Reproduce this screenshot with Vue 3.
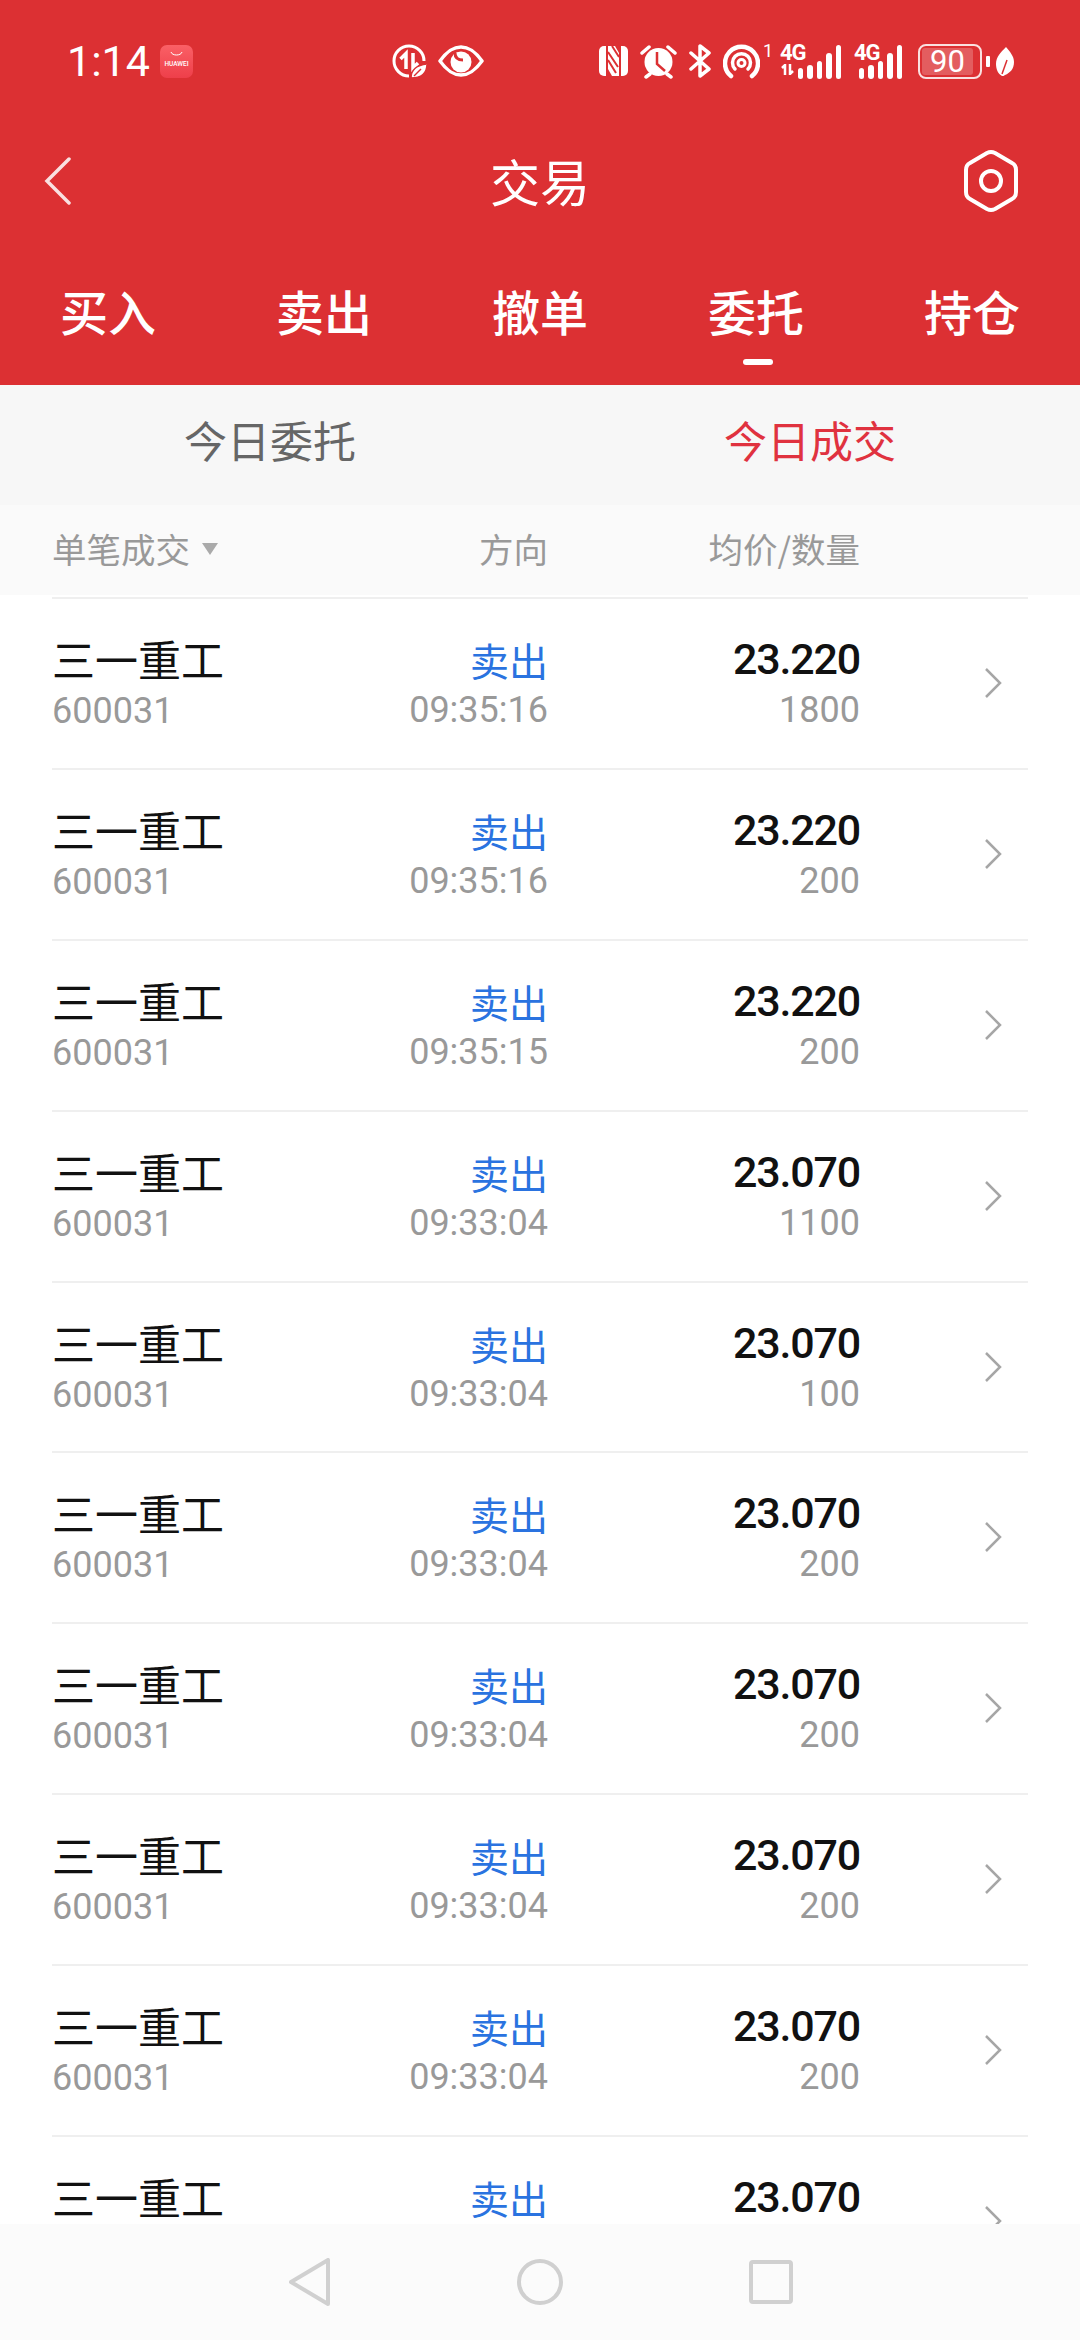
<script setup>
const tabs = ['买入', '卖出', '撤单', '委托', '持仓']

const trades = [
  { time: '09:35:16', price: '23.220', qty: '1800' },
  { time: '09:35:16', price: '23.220', qty: '200' },
  { time: '09:35:15', price: '23.220', qty: '200' },
  { time: '09:33:04', price: '23.070', qty: '1100' },
  { time: '09:33:04', price: '23.070', qty: '100' },
  { time: '09:33:04', price: '23.070', qty: '200' },
  { time: '09:33:04', price: '23.070', qty: '200' },
  { time: '09:33:04', price: '23.070', qty: '200' },
  { time: '09:33:04', price: '23.070', qty: '200' },
  { time: '09:33:04', price: '23.070', qty: '200' },
]
</script>

<template>
  <div class="page">
    <header class="top">
      <div class="status">
        <span class="clock">1:14</span>
        <svg class="ic-store" width="33" height="33" viewBox="0 0 33 33">
          <defs>
            <linearGradient id="store" x1="0" y1="0" x2="0" y2="1">
              <stop offset="0" stop-color="#fa6066" />
              <stop offset="1" stop-color="#ee3f4a" />
            </linearGradient>
          </defs>
          <rect width="33" height="33" rx="7" fill="url(#store)" />
          <path d="M11 7c1 4 10 4 11 0" fill="none" stroke="#fff" stroke-width="1" />
          <text x="16.500" y="21" class="store-text" text-anchor="middle">HUAWEI</text>
        </svg>

        <svg class="ic-data" width="35" height="34" viewBox="0 0 35 34">
          <path d="M32 17A15 15 0 1 0 17 32" fill="none" stroke="#fff" stroke-width="3" />
          <path d="M14 25V9.500L8.500 15M21 9v15l5-5" fill="none" stroke="#fff" stroke-width="3.500" />
          <path d="M19 34c0-8 6-13 16-14 0 9-6 14-16 14z" fill="#fff" stroke="#dc3033" stroke-width="1.500" />
          <path d="M22 32l7-7" stroke="#dc3033" stroke-width="1.500" />
        </svg>
        <svg class="ic-eye" width="46" height="32" viewBox="0 0 46 32">
          <path d="M2 16C10 5 16 2 23 2s13 3 21 14c-8 11-14 14-21 14S10 27 2 16z" fill="none" stroke="#fff" stroke-width="3.500" stroke-linejoin="round" />
          <circle cx="23" cy="17" r="10.500" fill="#fff" />
          <path d="M17 8c0 5 3 7 8 7" fill="none" stroke="#dc3033" stroke-width="3" />
        </svg>

        <svg class="ic-nfc" width="31" height="32" viewBox="0 0 31 32">
          <path d="M8 1H6a5 5 0 0 0-5 5v20a5 5 0 0 0 5 5h2V1z" fill="#fff" />
          <path d="M23 1h2a5 5 0 0 1 5 5v20a5 5 0 0 1-5 5h-2V1z" fill="#fff" />
          <path d="M10 1h7l4 7v23h-7l-4-7V1z" fill="#fff" />
          <path d="M10 7l10 15M10 15l8 13M14 1l7 11" stroke="#dc3033" stroke-width="2" />
        </svg>
        <svg class="ic-alarm" width="37" height="35" viewBox="0 0 37 35">
          <circle cx="18.500" cy="18" r="14" fill="#fff" />
          <path d="M17 8v12l8 7" fill="none" stroke="#dc3033" stroke-width="2.500" />
          <path d="M2 9l7-6M35 9l-7-6M6 33l4-3M31 33l-4-3" stroke="#fff" stroke-width="3.500" stroke-linecap="round" />
        </svg>
        <svg class="ic-bt" width="23" height="34" viewBox="0 0 23 34">
          <path d="M2 25L20 9 11 2v30l9-7L2 9" fill="none" stroke="#fff" stroke-width="3.500" stroke-linejoin="round" stroke-linecap="round" />
        </svg>
        <svg class="ic-hot" width="37" height="35" viewBox="0 0 37 35">
          <path d="M8 32a16.500 16.500 0 1 1 21 0" fill="none" stroke="#fff" stroke-width="4.500" stroke-linecap="round" />
          <path d="M12 25a9 9 0 1 1 13 0" fill="none" stroke="#fff" stroke-width="3.500" stroke-linecap="round" />
          <circle cx="18.500" cy="19" r="3.500" fill="none" stroke="#fff" stroke-width="3" />
        </svg>
        <span class="sim-one">1</span>

        <div class="sim sim-a">
          <div class="sim-label">
            <span>4G</span>
            <svg width="14" height="11" viewBox="0 0 14 11">
              <path d="M4 11V1L1 4M9 0v10l3-3" fill="none" stroke="#fff" stroke-width="2.500" />
            </svg>
          </div>
          <div class="bars">
            <i class="b1"></i><i class="b2"></i><i class="b3"></i><i class="b4"></i><i class="b5"></i>
          </div>
        </div>
        <div class="sim sim-b">
          <div class="sim-label"><span>4G</span></div>
          <div class="bars bars-over">
            <i class="b1"></i><i class="b2"></i><i class="b3"></i><i class="b4"></i><i class="b5"></i>
          </div>
        </div>

        <div class="battery">
          <div class="battery-fill"></div>
          <span class="battery-num">90</span>
        </div>
        <i class="battery-tip"></i>
        <svg class="ic-leaf" width="18" height="29" viewBox="0 0 18 29">
          <path d="M10 0c4 5 8 9 8 15 0 7-4 11-9 13-1 1-2 1-3 1C2 27 0 22 0 17 0 10 5 5 10 0z" fill="#fff" />
          <path d="M6 27l5-14" stroke="#dc3033" stroke-width="1.500" />
        </svg>
      </div>

      <div class="nav">
        <svg width="28" height="48" viewBox="0 0 28 48">
          <path d="M25 2L3 24l22 22" class="back" />
        </svg>
        <span class="title">交易</span>
        <svg class="nav-gear" width="58" height="64" viewBox="0 0 58 64">
          <path d="M25 4q4-2 8 0l17 10q4 2 4 7v22q0 5-4 7L33 60q-4 2-8 0L8 50q-4-2-4-7V21q0-5 4-7z" class="gear" />
          <circle cx="29" cy="32" r="10" class="gear" />
        </svg>
      </div>

      <nav class="tabs">
        <div v-for="(tab, idx) in tabs" :key="tab" class="tab">
          {{ tab }}
          <i v-if="idx === 3" class="tab-mark"></i>
        </div>
      </nav>
    </header>

    <div class="subtabs">
      <div>今日委托</div>
      <div class="on">今日成交</div>
    </div>

    <div class="thead cols">
      <div class="th-first">单笔成交<i class="caret"></i></div>
      <div class="right">方向</div>
      <div class="right">均价/数量</div>
    </div>

    <div class="list">
      <div v-for="(t, idx) in trades" :key="idx" class="row cols">
        <div>
          <div class="name">三一重工</div>
          <div class="sub">600031</div>
        </div>
        <div class="right">
          <div class="dir">卖出</div>
          <div class="sub">{{ t.time }}</div>
        </div>
        <div class="right">
          <div class="price">{{ t.price }}</div>
          <div class="sub">{{ t.qty }}</div>
        </div>
        <svg class="more" width="18" height="30" viewBox="0 0 18 30">
          <path d="M2 1l14 14L2 29" fill="none" stroke="#a6a6a6" stroke-width="2.500" />
        </svg>
      </div>
    </div>

    <footer class="sysbar">
      <svg width="42" height="48" viewBox="0 0 42 48">
        <path d="M39 2v44L2 24z" class="sys" />
      </svg>
      <svg width="46" height="48" viewBox="0 0 46 48">
        <circle cx="23" cy="24" r="21" class="sys" />
      </svg>
      <svg width="44" height="44" viewBox="0 0 44 44">
        <rect x="2" y="2" width="40" height="40" rx="2" class="sys" />
      </svg>
    </footer>
  </div>
</template>

<style>
html,
body {
  margin: 0;
  background: #fff;
}
</style>

<style scoped>
.page {
  position: relative;
  width: 1080px;
  height: 2340px;
  overflow: hidden;
  background: #fff;
  font-family: 'Noto Sans CJK SC', Roboto, sans-serif;
}

.top {
  background: #dc3033;
  color: #fff;
  height: 385px;
}

/* barra de estado */
.status {
  height: 122px;
  display: flex;
  align-items: center;
  color: #fff;
  font-family: Roboto, sans-serif;
}

.clock {
  margin-left: 67px;
  width: 93px;
  font-size: 43px;
}

.store-text {
  font-family: Roboto, sans-serif;
  font-size: 6.500px;
  font-weight: 500;
  fill: #fff;
}

.ic-data { margin-left: 199px; }
.ic-eye { margin-left: 11px; }
.ic-nfc { margin-left: 114px; }
.ic-alarm { margin-left: 11px; }
.ic-bt { margin-left: 12px; }
.ic-hot { margin-left: 11px; }

.sim-one {
  align-self: flex-start;
  margin: 40px 0 0 3px;
  font-size: 18px;
  width: 10px;
}

.sim {
  position: relative;
  height: 36px;
  display: flex;
}

.sim-a { margin-left: 7px; width: 61px; }
.sim-b { margin-left: 13px; width: 50px; }

.sim-label {
  display: flex;
  flex-direction: column;
  font-size: 22px;
  font-weight: 700;
  line-height: 20px;
  letter-spacing: -1px;
  gap: 1px;
}

.sim-label svg {
  margin-left: 1px;
}

.bars {
  position: absolute;
  right: 0;
  bottom: 0;
  display: flex;
  align-items: flex-end;
  gap: 4px;
}

.bars i {
  display: block;
  width: 5.500px;
  border-radius: 3px;
  background: #fff;
}

.bars-over { right: 2px; }
.b1 { height: 11px; }
.b2 { height: 14px; }
.b3 { height: 18px; }
.b4 { height: 26px; }
.b5 { height: 34px; }

.battery {
  position: relative;
  margin-left: 14px;
  width: 64px;
  height: 35px;
  box-sizing: border-box;
  border: 2px solid rgba(255, 255, 255, 0.85);
  border-radius: 8px;
  overflow: hidden;
  display: flex;
  align-items: center;
  justify-content: center;
}

.battery-fill {
  position: absolute;
  inset: 2px 7px 2px 2px;
  background: rgba(255, 255, 255, 0.22);
  border-radius: 3px;
}

.battery-num {
  position: relative;
  font-size: 31px;
  margin-right: 5px;
}

.battery-tip {
  margin-left: 4px;
  width: 4px;
  height: 11px;
  border-radius: 1px;
  background: #fff;
}

.ic-leaf { margin-left: 6px; }

/* título */
.nav {
  height: 118px;
  padding: 0 44px;
  display: grid;
  grid-template-columns: 1fr auto 1fr;
  align-items: center;
}

.nav-gear {
  justify-self: end;
  margin-right: 16px;
}

.back {
  fill: none;
  stroke: rgba(255, 255, 255, 0.85);
  stroke-width: 3.500;
  stroke-linecap: round;
}

.gear {
  fill: none;
  stroke: #fff;
  stroke-width: 4;
  stroke-linejoin: round;
}

.title {
  font-size: 50px;
  line-height: 60px;
  padding-bottom: 2px;
}

.tabs {
  display: grid;
  grid-template-columns: repeat(5, 1fr);
  padding-top: 41px;
}

.tab {
  position: relative;
  text-align: center;
  font-size: 48px;
  font-weight: 500;
  line-height: 58px;
}

.tab-mark {
  position: absolute;
  left: 95px;
  top: 78px;
  width: 30px;
  height: 6px;
  border-radius: 3px;
  background: #fff;
}

/* subpestañas */
.subtabs {
  height: 120px;
  display: grid;
  grid-template-columns: 1fr 1fr;
  background: #f7f7f7;
  color: #666;
  font-size: 43px;
  line-height: 108px;
  text-align: center;
}

.subtabs .on {
  color: #e0323f;
}

.cols {
  display: grid;
  grid-template-columns: 248px 248px 312px 1fr;
  padding: 0 52px;
  margin: 0;
}

.right {
  text-align: right;
}

.thead {
  height: 90px;
  padding-bottom: 5px;
  box-sizing: border-box;
  background: #fafafa;
  align-items: center;
  color: #999;
  font-size: 34.500px;
}

.th-first {
  display: flex;
  align-items: center;
}

.caret {
  margin: 2px 0 0 12px;
  border-left: 8px solid transparent;
  border-right: 8px solid transparent;
  border-top: 12px solid #aaa;
}

.list {
  padding-top: 2px;
}

.row {
  position: relative;
  height: 170.900px;
  align-items: start;
  padding-top: 33px;
  box-sizing: border-box;
}

.row::before {
  content: '';
  position: absolute;
  left: 52px;
  right: 52px;
  top: 0;
  height: 2px;
  background: #efefef;
}

.name {
  font-size: 43px;
  line-height: 56px;
  color: #111;
}

.dir {
  font-size: 39px;
  line-height: 58px;
  color: #2a73e0;
}

.price {
  font-family: Roboto, sans-serif;
  font-size: 43px;
  font-weight: 500;
  letter-spacing: -1.200px;
  line-height: 58px;
  color: #111;
}

.sub {
  font-family: Roboto, sans-serif;
  font-size: 36px;
  line-height: 42px;
  color: #999;
  margin-top: 1px;
}

.name + .sub {
  margin-top: 4px;
}

.more {
  align-self: center;
  justify-self: end;
  margin: 0 26px 32px 0;
}

/* navegación del sistema */
.sysbar {
  position: absolute;
  left: 0;
  right: 0;
  bottom: 0;
  height: 116px;
  padding-left: 2px;
  background: #fbfbfb;
  display: flex;
  align-items: center;
  justify-content: center;
  gap: 186px;
}

.sys {
  fill: none;
  stroke: #d0d0d0;
  stroke-width: 4;
  stroke-linejoin: round;
}
</style>
